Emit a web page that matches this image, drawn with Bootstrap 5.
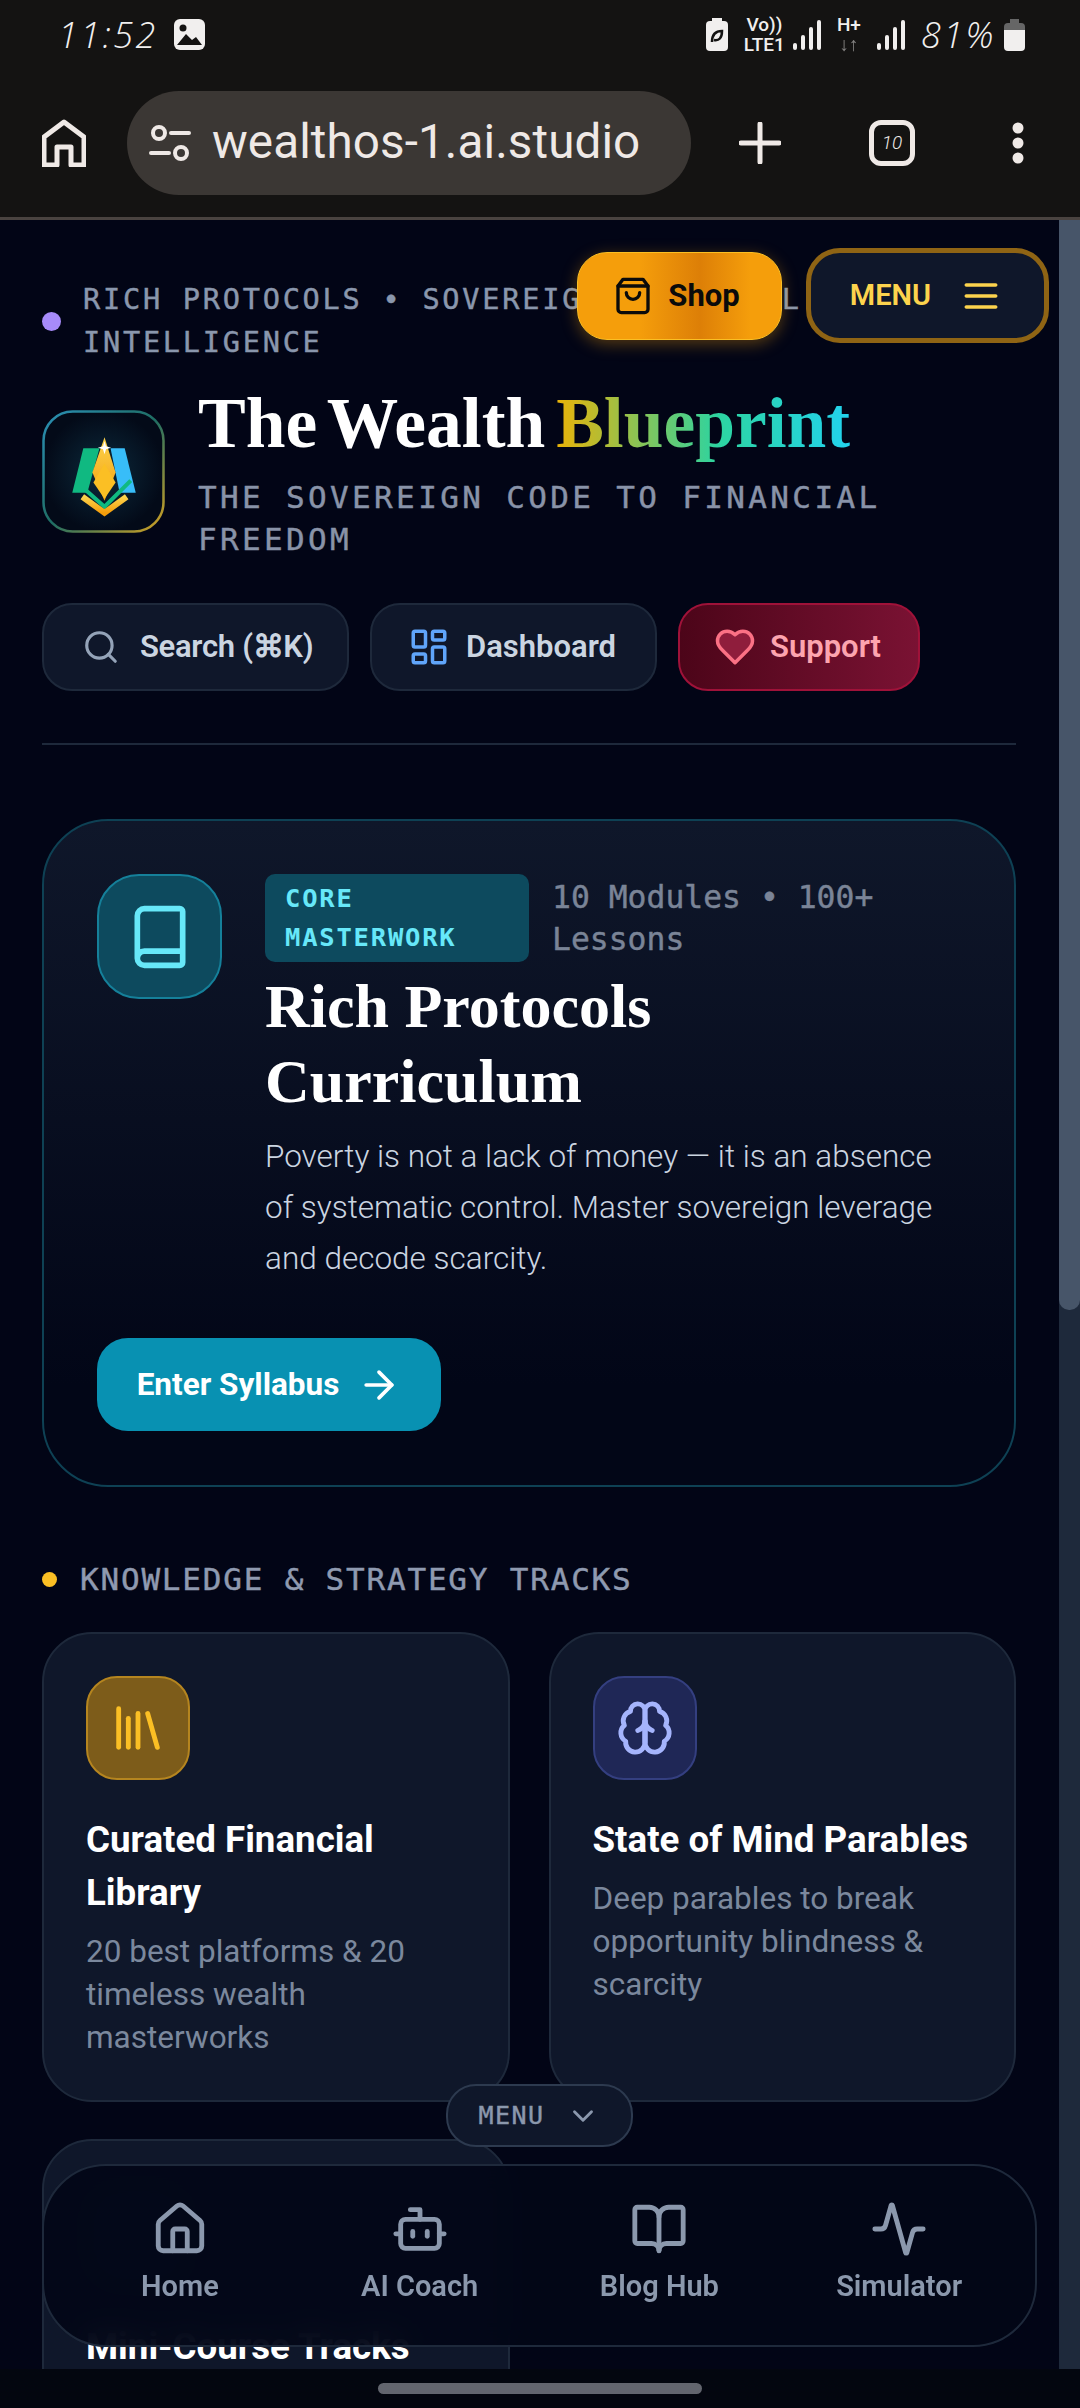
<!doctype html>
<html lang="en">
<head>
<meta charset="utf-8">
<title>The Wealth Blueprint</title>
<link href="https://cdn.jsdelivr.net/npm/bootstrap@5.3.0/dist/css/bootstrap.min.css" rel="stylesheet">
<style>
html,body{margin:0;background:#020516;}
body{font-family:Roboto,"Liberation Sans",sans-serif;}
.wb-shell{width:1080px;height:2408px;overflow:hidden;}
.wb-ic{fill:none;stroke:currentColor;stroke-width:2;stroke-linecap:round;stroke-linejoin:round;flex:none;}
.wb-status{height:60px;background:#141312;color:#f1efee;padding:9px 55px 0 58px;}
.wb-hand{font-family:"Open Sans",sans-serif;font-weight:300;font-style:italic;font-size:36px;letter-spacing:2.5px;line-height:1;}
.wb-net{font-size:19px;line-height:20px;font-weight:500;text-align:center;}
.wb-toolbar{height:157px;background:#141312;color:#efe9e6;padding:9px 44px 0 42px;}
.wb-url{width:564px;height:104px;margin-left:41px;margin-right:48px;background:#3b3734;border-radius:52px;padding-left:22px;font-size:47.6px;letter-spacing:.1px;}
.wb-urltext{margin-left:21px;}
.wb-tab{width:46px;height:46px;border:5px solid #efe9e6;border-radius:12px;font-size:19px;font-style:italic;font-weight:300;margin-left:88px;margin-right:96px;}
.wb-divider{height:3px;background:#4a4340;}
.wb-main{height:2149px;background:#020516;}
.wb-page{padding:58px 43px 0 42px;width:1059px;}
.wb-mono{font-family:"DejaVu Sans Mono","Liberation Mono",monospace;-webkit-text-stroke:.45px currentColor;}
.wb-dot{width:19px;height:19px;border-radius:50%;background:#a78bfa;flex:none;}
.wb-eyebrow{font-size:28.6px;line-height:43px;letter-spacing:2.75px;color:#8a97ad;margin-left:22px;white-space:pre-line;}
.wb-logo{width:123px;height:123px;flex:none;margin-top:26px;}
.wb-title{font-family:"Liberation Serif","DejaVu Serif",serif;font-weight:700;font-size:71.5px;word-spacing:-7px;line-height:77px;color:#fff;margin:0;}
.wb-grad{background:linear-gradient(90deg,#eab308,#2dd4a0 55%,#22d3ee);-webkit-background-clip:text;background-clip:text;color:transparent;}
.wb-sub{font-size:31px;line-height:42px;letter-spacing:3.35px;color:#8993a8;margin:15px 0 0;}
.wb-head{gap:33px;margin-top:20px;}
.wb-actions{gap:21px;margin-top:43px;}
.wb-act{height:88px;border-radius:30px;font-family:Roboto,sans-serif;font-weight:600;font-size:31px;gap:16px;padding:0 0 0 36px;background:#0f172a;border:2px solid #1e293b;color:#cbd5e1;}
.wb-w1{width:307px;gap:20px;padding-left:38px;letter-spacing:-.3px;}
.wb-w2{width:287px;}
.wb-w3{width:242px;gap:14px;padding-left:34px;}
.wb-act-red{background:linear-gradient(90deg,#4c0519,#7a1233);border-color:#9f1239;color:#fda4af;}
.wb-rule{height:2px;background:#1e293b;margin:52px 0 0;opacity:1;border:0;}
.wb-hero{margin-top:74px;height:668px;border-radius:66px;border:2px solid #0e4154;background:linear-gradient(180deg,#0f172a,#020617 85%);padding:53px 53px;}
.wb-heroicon{width:125px;height:125px;border-radius:42px;background:#0d4a5e;border:2px solid #15809a;color:#67e8f9;flex:none;}
.wb-herotext{margin-left:43px;}
.wb-badge{width:264px;background:#0d4a5e;color:#67e8f9;font-size:25.5px;font-weight:700;letter-spacing:1.8px;line-height:39px;border-radius:10px;padding:5px 20px;flex:none;-webkit-text-stroke:0;}
.wb-meta{font-size:31.4px;line-height:42px;color:#7a8497;margin-left:23px;margin-top:2px;}
.wb-hero h2{font-family:"Liberation Serif","DejaVu Serif",serif;font-weight:700;font-size:62px;line-height:75px;color:#fff;margin:7px 0 0;}
.wb-hero p{font-size:31.5px;font-weight:300;line-height:51px;color:#cbd5e1;margin:12px 0 0;}
.wb-cta{width:344px;height:93px;border-radius:31px;background:#0891b2;color:#fff;border:0;font-weight:700;font-size:31.5px;gap:18px;margin-top:54px;}
.wb-cta:hover{background:#0891b2;color:#fff;}
.wb-sec{margin-top:67px;height:50px;gap:23px;font-size:31px;letter-spacing:1.8px;color:#8f9ab0;}
.wb-sec i{width:15px;height:15px;border-radius:50%;background:#fbbf24;}
.wb-grid{--bs-gutter-x:39px;--bs-gutter-y:37px;margin-top:-9px;}
.wb-card{height:470px;border-radius:50px;background:#0f172a;border:2px solid #1e293b;padding:42px;color:#fff;}
.wb-cardicon{width:104px;height:104px;border-radius:31px;border:2px solid;}
.wb-amber{background:#7d5c1a;border-color:#b5851f;color:#fbbf24;}
.wb-indigo{background:#1f2756;border-color:#343f80;color:#a5b4fc;}
.wb-muted{background:#13233a;border-color:#1e293b;}
.wb-card h3{font-family:Roboto,sans-serif;font-weight:700;font-size:36.7px;line-height:53px;margin:33px 0 0;}
.wb-card p{font-size:31.5px;line-height:43px;color:#7b889d;margin:11px 0 0;}
.wb-scroll{width:21px;background:#1e293b;}
.wb-thumb{height:1090px;background:#475569;border-radius:0 0 10px 10px;}
.wb-shop{left:577px;top:32px;width:205px;height:88px;border-radius:30px;background:linear-gradient(90deg,#f59e0b,#f59e0b 30%,#dd7f07 60%,#f59e0b 85%);border:1px solid #fbbf24;box-shadow:0 4px 16px rgba(245,158,11,.35);color:#0b0b0b;font-weight:700;font-size:31px;gap:15px;padding:0 6px 0 0;}
.wb-menu{left:806px;top:28px;width:243px;height:95px;border-radius:34px;background:#0f172a;border:5px solid #8f6414;color:#fcd34d;font-weight:600;font-size:29px;gap:28px;padding:0 2px 0 0;}
.wb-toggle{left:446px;top:1864px;width:187px;height:63px;border-radius:30px;background:#0f172a;border:2px solid #2d3a4f;color:#8b98ad;font-size:25px;letter-spacing:1.4px;gap:22px;padding:0;}
.wb-nav{left:42px;top:1944px;width:995px;height:183px;border-radius:64px;background:rgba(2,6,23,.93);backdrop-filter:blur(14px);border:2px solid #1e293b;padding:0 16px;}
.wb-navitem{width:240px;color:#8b98ad;font-weight:600;font-size:29px;line-height:40px;gap:8px;padding:0;margin-top:-6px;}
.wb-gesture{height:39px;background:#03060f;padding-top:14px;}
.wb-handle{width:324px;height:11px;border-radius:6px;background:#62656e;}
</style>
</head>
<body>
<div class="wb-shell d-flex flex-column">
  <div class="wb-status d-flex align-items-center">
    <span class="wb-hand">11:52</span>
    <svg class="ms-3" width="31" height="31" viewBox="0 0 31 31"><rect width="31" height="31" rx="6" fill="#f1efee"/><circle cx="9" cy="9" r="3.5" fill="#141312"/><path d="M3 26l9-11 6 6 4-3 6 8z" fill="#141312"/></svg>
    <div class="ms-auto d-flex align-items-center gap-2">
      <svg class="me-2" width="22" height="33" viewBox="0 0 22 33"><rect x="6" y="0" width="10" height="4" fill="#f1efee"/><rect y="3" width="22" height="30" rx="4" fill="#f1efee"/><path d="M6 24c0-8 4-11 10-11 0 7-3 10-8 9" fill="none" stroke="#141312" stroke-width="2.5"/></svg>
      <div class="wb-net">Vo))<br>LTE1</div>
      <svg width="28" height="30" viewBox="0 0 28 30" fill="#f1efee"><rect x="0" y="23" width="4" height="7" rx="2"/><rect x="8" y="15" width="4" height="15" rx="2"/><rect x="16" y="7" width="4" height="23" rx="2"/><rect x="24" y="0" width="4" height="30" rx="2"/></svg>
      <div class="wb-net mx-2">H+<br><span class="opacity-50">↓↑</span></div>
      <svg class="me-2" width="28" height="30" viewBox="0 0 28 30" fill="#f1efee"><rect x="0" y="23" width="4" height="7" rx="2"/><rect x="8" y="15" width="4" height="15" rx="2"/><rect x="16" y="7" width="4" height="23" rx="2"/><rect x="24" y="0" width="4" height="30" rx="2"/></svg>
      <span class="wb-hand">81%</span>
      <svg width="21" height="32" viewBox="0 0 21 32"><rect x="6" y="0" width="9" height="4" fill="#666"/><path d="M0 8a4 4 0 0 1 4-4h13a4 4 0 0 1 4 4v3H0z" fill="#666"/><path d="M0 11h21v17a4 4 0 0 1-4 4H4a4 4 0 0 1-4-4z" fill="#f1efee"/></svg>
    </div>
  </div>
  <div class="wb-toolbar d-flex align-items-center">
    <svg class="wb-ic" width="44" height="48" viewBox="0 0 44 48" style="stroke-width:5;stroke-linecap:butt"><path d="M2 46V18L22 3l20 15v28H29V28H15v18z"/></svg>
    <div class="wb-url d-flex align-items-center">
      <svg class="wb-ic" width="42" height="36" viewBox="0 0 42 36" style="stroke-width:4"><circle cx="10" cy="8" r="6"/><path d="M22 8h18M2 28h18"/><circle cx="32" cy="28" r="6"/></svg>
      <span class="wb-urltext text-nowrap">wealthos-1.ai.studio</span>
    </div>
    <svg class="wb-ic" width="42" height="42" viewBox="0 0 42 42" style="stroke-width:5"><path d="M21 2v38M2 21h38"/></svg>
    <div class="wb-tab d-flex align-items-center justify-content-center">10</div>
    <svg width="14" height="42" viewBox="0 0 14 42" fill="#efe9e6"><circle cx="7" cy="6" r="5.5"/><circle cx="7" cy="21" r="5.5"/><circle cx="7" cy="36" r="5.5"/></svg>
  </div>
  <div class="wb-divider"></div>

  <main class="wb-main d-flex position-relative overflow-hidden">
    <div class="wb-page flex-grow-1">
      <div class="d-flex align-items-center">
        <span class="wb-dot"></span>
        <div class="wb-eyebrow wb-mono">RICH PROTOCOLS • SOVEREIGN FINANCIAL
INTELLIGENCE</div>
      </div>
      <div class="wb-head d-flex">
        <svg class="wb-logo" viewBox="0 0 122 122">
          <defs>
            <linearGradient id="lb" x1="0" y1="0" x2="1" y2="1"><stop offset="0" stop-color="#2a8fb5"/><stop offset=".5" stop-color="#1f6d63"/><stop offset="1" stop-color="#d2a021"/></linearGradient>
            <radialGradient id="lf"><stop offset="0" stop-color="#0c2a3c"/><stop offset="1" stop-color="#030a18"/></radialGradient>
            <linearGradient id="lg" x1="0" y1="0" x2="0" y2="1"><stop offset="0" stop-color="#fcd34d"/><stop offset="1" stop-color="#f59e0b"/></linearGradient>
          </defs>
          <rect x="1.5" y="1.5" width="119" height="119" rx="29" fill="url(#lf)" stroke="url(#lb)" stroke-width="2.5"/>
          <path d="M41 38h16L45 82H30z" fill="#10b981"/>
          <path d="M68 38h14l11 44H77z" fill="#38bdf8"/>
          <path d="M62 27 73 62 62 90 50 62z" fill="url(#lg)"/>
          <path d="M62 53 73 72 62 88 51 72z" fill="#fbbf24"/>
          <path d="M43 79 62 96 88 70" fill="none" stroke="#10b981" stroke-width="4"/>
          <path d="M40 86 62 102 84 86" fill="none" stroke="url(#lg)" stroke-width="6"/>
          <path d="M62 31l1.5 5 5 1.5-5 1.5-1.5 5-1.5-5-5-1.5 5-1.5z" fill="#fff"/>
        </svg>
        <div>
          <h1 class="wb-title text-nowrap">The Wealth <span class="wb-grad">Blueprint</span></h1>
          <p class="wb-sub wb-mono">THE SOVEREIGN CODE TO FINANCIAL<br>FREEDOM</p>
        </div>
      </div>
      <div class="wb-actions d-flex">
        <button class="btn wb-act wb-w1 d-flex align-items-center"><svg class="wb-ic" width="38" height="38" viewBox="0 0 24 24" color="#94a3b8"><circle cx="11" cy="11" r="8"/><path d="m21 21-4.3-4.3"/></svg>Search (⌘K)</button>
        <button class="btn wb-act wb-w2 d-flex align-items-center"><svg class="wb-ic" width="42" height="42" viewBox="0 0 24 24" color="#60a5fa"><rect x="3" y="3" width="7" height="9" rx="1"/><rect x="14" y="3" width="7" height="5" rx="1"/><rect x="14" y="12" width="7" height="9" rx="1"/><rect x="3" y="16" width="7" height="5" rx="1"/></svg>Dashboard</button>
        <button class="btn wb-act wb-w3 wb-act-red d-flex align-items-center"><svg class="wb-ic" width="42" height="42" viewBox="0 0 24 24" color="#fb7185" style="fill:#8f1d3c"><path d="M19 14c1.49-1.46 3-3.21 3-5.5A5.5 5.5 0 0 0 16.5 3c-1.76 0-3 .5-4.5 2-1.5-1.5-2.74-2-4.5-2A5.5 5.5 0 0 0 2 8.5c0 2.3 1.5 4.05 3 5.5l7 7Z"/></svg>Support</button>
      </div>
      <hr class="wb-rule">

      <section class="wb-hero">
        <div class="d-flex">
          <div class="wb-heroicon d-flex align-items-center justify-content-center"><svg class="wb-ic" width="68" height="68" viewBox="0 0 24 24"><path d="M4 19.5v-15A2.5 2.5 0 0 1 6.5 2H19a1 1 0 0 1 1 1v18a1 1 0 0 1-1 1H6.5a1 1 0 0 1 0-5H20"/></svg></div>
          <div class="wb-herotext flex-grow-1">
            <div class="d-flex align-items-start">
              <span class="wb-badge wb-mono">CORE<br>MASTERWORK</span>
              <span class="wb-meta wb-mono">10 Modules • 100+<br>Lessons</span>
            </div>
            <h2>Rich Protocols<br>Curriculum</h2>
            <p>Poverty is not a lack of money — it is an absence<br>of systematic control. Master sovereign leverage<br>and decode scarcity.</p>
          </div>
        </div>
        <button class="btn wb-cta d-flex align-items-center justify-content-center">Enter Syllabus<svg class="wb-ic" width="44" height="44" viewBox="0 0 24 24"><path d="M5 12h14"/><path d="m12 5 7 7-7 7"/></svg></button>
      </section>

      <div class="wb-sec wb-mono d-flex align-items-center"><i></i>KNOWLEDGE &amp; STRATEGY TRACKS</div>

      <div class="row wb-grid">
        <div class="col-6">
          <div class="wb-card">
            <div class="wb-cardicon wb-amber d-flex align-items-center justify-content-center"><svg class="wb-ic" width="58" height="58" viewBox="0 0 24 24"><path d="m16 6 4 14"/><path d="M12 6v14"/><path d="M8 8v12"/><path d="M4 4v16"/></svg></div>
            <h3>Curated Financial<br>Library</h3>
            <p>20 best platforms &amp; 20<br>timeless wealth<br>masterworks</p>
          </div>
        </div>
        <div class="col-6">
          <div class="wb-card">
            <div class="wb-cardicon wb-indigo d-flex align-items-center justify-content-center"><svg class="wb-ic" width="58" height="58" viewBox="0 0 24 24"><path d="M12 5a3 3 0 1 0-5.997.125 4 4 0 0 0-2.526 5.77 4 4 0 0 0 .556 6.588A4 4 0 1 0 12 18Z"/><path d="M12 5a3 3 0 1 1 5.997.125 4 4 0 0 1 2.526 5.77 4 4 0 0 1-.556 6.588A4 4 0 1 1 12 18Z"/><path d="M12 18V9"/><path d="M15 13a4.5 4.5 0 0 1-3-4 4.5 4.5 0 0 1-3 4"/></svg></div>
            <h3>State of Mind Parables</h3>
            <p>Deep parables to break<br>opportunity blindness &amp;<br>scarcity</p>
          </div>
        </div>
        <div class="col-6">
          <div class="wb-card">
            <div class="wb-cardicon wb-muted"></div>
            <h3>Mini-Course Tracks</h3>
          </div>
        </div>
      </div>
    </div>
    <div class="wb-scroll flex-shrink-0"><div class="wb-thumb"></div></div>

    <button class="btn wb-shop position-absolute d-flex align-items-center justify-content-center"><svg class="wb-ic" width="40" height="40" viewBox="0 0 24 24"><path d="M6 2 3 6v14a2 2 0 0 0 2 2h14a2 2 0 0 0 2-2V6l-3-4Z"/><path d="M3 6h18"/><path d="M16 10a4 4 0 0 1-8 0"/></svg>Shop</button>
    <button class="btn wb-menu position-absolute d-flex align-items-center justify-content-center">MENU<svg class="wb-ic" width="44" height="44" viewBox="0 0 24 24"><path d="M4 6h16M4 12h16M4 18h16"/></svg></button>
    <button class="btn wb-toggle wb-mono position-absolute d-flex align-items-center justify-content-center">MENU<svg class="wb-ic" width="34" height="34" viewBox="0 0 24 24"><path d="m6 9 6 6 6-6"/></svg></button>
    <nav class="wb-nav position-absolute d-flex align-items-center">
      <a class="wb-navitem d-flex flex-column align-items-center text-decoration-none"><svg class="wb-ic" width="58" height="58" viewBox="0 0 24 24"><path d="M15 21v-8a1 1 0 0 0-1-1h-4a1 1 0 0 0-1 1v8"/><path d="M3 10a2 2 0 0 1 .709-1.528l7-5.999a2 2 0 0 1 2.582 0l7 5.999A2 2 0 0 1 21 10v9a2 2 0 0 1-2 2H5a2 2 0 0 1-2-2z"/></svg>Home</a>
      <a class="wb-navitem d-flex flex-column align-items-center text-decoration-none"><svg class="wb-ic" width="58" height="58" viewBox="0 0 24 24"><path d="M12 8V4H8"/><rect x="4" y="8" width="16" height="12" rx="2"/><path d="M2 14h2"/><path d="M20 14h2"/><path d="M15 13v2"/><path d="M9 13v2"/></svg>AI Coach</a>
      <a class="wb-navitem d-flex flex-column align-items-center text-decoration-none"><svg class="wb-ic" width="58" height="58" viewBox="0 0 24 24"><path d="M12 7v14"/><path d="M3 18a1 1 0 0 1-1-1V4a1 1 0 0 1 1-1h5a4 4 0 0 1 4 4 4 4 0 0 1 4-4h5a1 1 0 0 1 1 1v13a1 1 0 0 1-1 1h-6a3 3 0 0 0-3 3 3 3 0 0 0-3-3z"/></svg>Blog Hub</a>
      <a class="wb-navitem d-flex flex-column align-items-center text-decoration-none"><svg class="wb-ic" width="58" height="58" viewBox="0 0 24 24"><path d="M22 12h-2.48a2 2 0 0 0-1.93 1.46l-2.35 8.36a.25.25 0 0 1-.48 0L9.24 2.18a.25.25 0 0 0-.48 0l-2.35 8.36A2 2 0 0 1 4.49 12H2"/></svg>Simulator</a>
    </nav>
  </main>
  <div class="wb-gesture d-flex justify-content-center"><div class="wb-handle"></div></div>
</div>
<script src="https://cdn.jsdelivr.net/npm/bootstrap@5.3.0/dist/js/bootstrap.bundle.min.js"></script>
</body>
</html>
